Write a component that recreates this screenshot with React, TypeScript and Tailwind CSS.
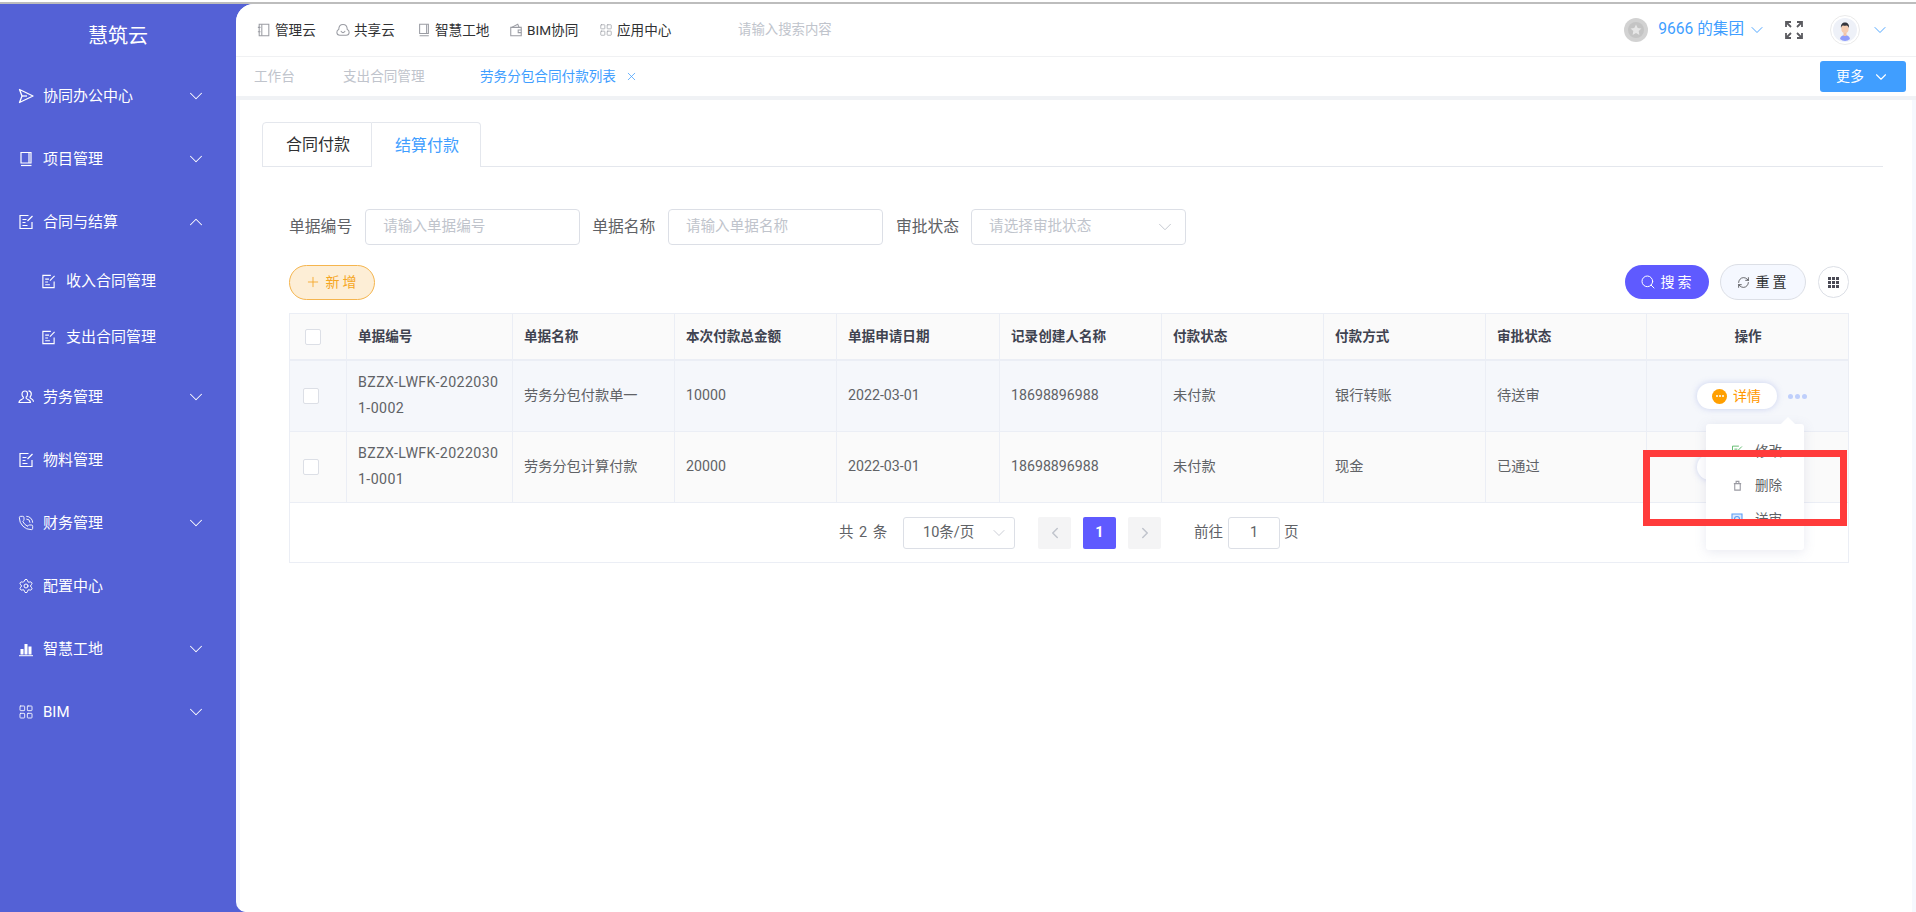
import { ChevronDown, ChevronLeft, ChevronRight, ChevronUp, LayoutGrid, PhoneCall, Plus, RefreshCw, Search, Settings, X } from 'lucide-react';
import type { ReactNode } from 'react';

const FONT = "font-['Roboto','Noto_Sans_CJK_SC',sans-serif]";

function PlaneIcon({ className }: { className?: string }) {
  return (
    <svg viewBox="0 0 16 16" fill="none" stroke="currentColor" strokeWidth="1.3" strokeLinejoin="round" className={className}>
      <path d="M1.500 1.500L15 8 1.500 14.500 4 8z" />
      <path d="M4 8h5" />
    </svg>
  );
}

function BookIcon({ className }: { className?: string }) {
  return (
    <svg viewBox="0 0 16 16" fill="none" stroke="currentColor" strokeWidth="1.2" className={className}>
      <path d="M3 1.5h10v10.5H3z" />
      <path d="M3 14.5h10.5" />
      <path d="M11 1.5v10.5" />
    </svg>
  );
}

function PaperPenIcon({ className }: { className?: string }) {
  return (
    <svg viewBox="0 0 16 16" fill="none" stroke="currentColor" strokeWidth="1.2" className={className}>
      <path d="M10.5 1.5H2v13h12V8" />
      <path d="M4.5 5.5h4M4.5 8.5h3M4.5 11.5h5" />
      <path d="M9.5 7l5-5" />
    </svg>
  );
}

function PeopleIcon({ className }: { className?: string }) {
  return (
    <svg viewBox="0 0 16 16" fill="none" stroke="currentColor" strokeWidth="1.2" className={className}>
      <path d="M7 2c-2 0-3 1.400-3 3.200 0 1.300.6 2.300 1.400 3 .3.800-.2 1.500-1.400 2-1.500.6-3 1.200-3 3.300h11.500c0-2-1.400-2.700-3-3.300-1.200-.5-1.700-1.200-1.400-2C8.900 7.500 9.500 6.500 9.500 5.200 9.500 3.400 9 2 7 2z" />
      <path d="M10.500 1.800c2 .2 2.800 1.600 2.800 3.300 0 1.200-.5 2.200-1.200 2.900-.2.800.2 1.300 1.200 1.800 1.200.6 2.200 1.200 2.200 3" />
    </svg>
  );
}

function BarsIcon({ className }: { className?: string }) {
  return (
    <svg viewBox="0 0 16 16" fill="currentColor" className={className}>
      <rect x="2.500" y="8" width="3" height="5.500" />
      <rect x="6.500" y="3" width="3" height="10.500" />
      <rect x="10.500" y="5.500" width="3" height="8" />
      <rect x="1" y="14.200" width="14" height="1" />
    </svg>
  );
}

function ManageIcon({ className }: { className?: string }) {
  return (
    <svg viewBox="0 0 16 16" fill="none" stroke="currentColor" strokeWidth="1.2" className={className}>
      <path d="M2.500 1.500h11v13h-11z" />
      <path d="M5.500 1.500v13" />
      <path d="M1 5h3M1 10h3" />
    </svg>
  );
}

function CloudIcon({ className }: { className?: string }) {
  return (
    <svg viewBox="0 0 16 16" fill="none" stroke="currentColor" strokeWidth="1.2" className={className}>
      <path d="M4.500 14C2.500 14 1 12.500 1 10.600c0-1.400.9-2.600 2.100-3.100C3.300 4 5.300 1.800 8 1.800s4.700 2.200 4.900 5.700c1.200.5 2.100 1.700 2.100 3.100 0 1.900-1.500 3.400-3.500 3.400z" />
      <path d="M5.500 9c.6 1.300 1.500 2 2.500 2s1.900-.7 2.500-2" />
    </svg>
  );
}

function WalletIcon({ className }: { className?: string }) {
  return (
    <svg viewBox="0 0 16 16" fill="none" stroke="currentColor" strokeWidth="1.2" className={className}>
      <path d="M2 5h12v9.500H2z" />
      <path d="M3 5l7-3.500L11.500 5" />
      <path d="M14 8h-3.500v3H14" />
    </svg>
  );
}

function FullscreenIcon({ className }: { className?: string }) {
  return (
    <svg viewBox="0 0 18 18" fill="none" stroke="currentColor" strokeWidth="1.800" className={className}>
      <path d="M1 6V1h5M1 1l5 5" />
      <path d="M12 1h5v5M17 1l-5 5" />
      <path d="M1 12v5h5M1 17l5-5" />
      <path d="M17 12v5h-5M17 17l-5-5" />
    </svg>
  );
}

function CoinIcon() {
  return (
    <svg viewBox="0 0 24 24" className="h-6 w-6 shrink-0">
      <circle cx="12" cy="12" r="12" fill="#d2d2d2" />
      <circle cx="12" cy="12" r="8" fill="#c4c4c4" />
      <path d="M12 6.500l1.700 3.500 3.800.5-2.800 2.600.7 3.800-3.400-1.900-3.400 1.900.7-3.800-2.800-2.600 3.800-.5z" fill="#e6e6e6" />
    </svg>
  );
}

function Avatar() {
  return (
    <svg viewBox="0 0 30 30" className="h-[30px] w-[30px] shrink-0">
      <circle cx="15" cy="15" r="14.500" fill="#fff" stroke="#eaeaea" />
      <circle cx="15" cy="15" r="12" fill="#eef1f8" />
      <path d="M10 24c.6-3 2.500-4 5-4s4.400 1 5 4c-1.500 1.300-3.200 2-5 2s-3.500-.7-5-2z" fill="#8f9dfb" />
      <rect x="13.500" y="16" width="3" height="5" fill="#f2c4a8" />
      <ellipse cx="15" cy="13.500" rx="3.700" ry="4.500" fill="#f6cdb2" />
      <path d="M11 13c-.6-3.500 1.500-5.500 4-5.500s4.600 2 4 5.500c-.5-1.600-1.300-2.400-2.500-2.600-1.500.3-3 .3-3.500.2-1.100.3-1.600 1.200-2 2.400z" fill="#33353d" />
    </svg>
  );
}

function GridDots() {
  const cells = [0, 1, 2, 3, 4, 5, 6, 7, 8];
  return (
    <div className="grid grid-cols-3 gap-px">
      {cells.map((c) => (
        <span key={c} className="h-[3px] w-[3px] bg-[#4a4a55]" />
      ))}
    </div>
  );
}

function NavItem({ icon, label, arrow }: { icon: ReactNode; label: string; arrow?: 'down' | 'up' }) {
  return (
    <div className="flex h-[63px] items-center pl-[18px] pr-[29px] text-[15px] text-white">
      <span className="mr-[9px] flex h-[16px] w-[16px] shrink-0 items-center justify-center">{icon}</span>
      <span className="flex-1">{label}</span>
      {arrow === 'down' && <ChevronDown size={22} strokeWidth={1.1} />}
      {arrow === 'up' && <ChevronUp size={22} strokeWidth={1.1} />}
    </div>
  );
}

function SubNavItem({ label }: { label: string }) {
  return (
    <div className="flex h-[56px] items-center pl-[41px] text-[15px] text-white">
      <PaperPenIcon className="mr-[10px] h-[15px] w-[15px]" />
      {label}
    </div>
  );
}

function Sidebar() {
  const iconCls = 'h-[16px] w-[16px]';
  return (
    <aside className="w-[236px] shrink-0">
      <div className="flex h-[60.5px] items-center justify-center pt-[3px] text-[20px] text-white">慧筑云</div>
      <NavItem icon={<PlaneIcon className={iconCls} />} label="协同办公中心" arrow="down" />
      <NavItem icon={<BookIcon className={iconCls} />} label="项目管理" arrow="down" />
      <NavItem icon={<PaperPenIcon className={iconCls} />} label="合同与结算" arrow="up" />
      <SubNavItem label="收入合同管理" />
      <SubNavItem label="支出合同管理" />
      <NavItem icon={<PeopleIcon className={iconCls} />} label="劳务管理" arrow="down" />
      <NavItem icon={<PaperPenIcon className={iconCls} />} label="物料管理" />
      <NavItem icon={<PhoneCall className={iconCls} strokeWidth={1.4} />} label="财务管理" arrow="down" />
      <NavItem icon={<Settings className={iconCls} strokeWidth={1.5} />} label="配置中心" />
      <NavItem icon={<BarsIcon className={iconCls} />} label="智慧工地" arrow="down" />
      <NavItem icon={<LayoutGrid className={iconCls} strokeWidth={1.3} />} label="BIM" arrow="down" />
    </aside>
  );
}

function TopBar() {
  const links = [
    { label: '管理云', icon: <ManageIcon className="h-[14px] w-[14px]" />, w: 'w-[79px]' },
    { label: '共享云', icon: <CloudIcon className="h-[14px] w-[14px]" />, w: 'w-[81px]' },
    { label: '智慧工地', icon: <BookIcon className="h-[14px] w-[14px]" />, w: 'w-[92px]' },
    { label: 'BIM协同', icon: <WalletIcon className="h-[14px] w-[14px]" />, w: 'w-[90px]' },
    { label: '应用中心', icon: <LayoutGrid className="h-[14px] w-[14px]" strokeWidth={1.2} />, w: 'w-[139px]' },
  ];
  return (
    <div className="flex h-[53px] items-center border-b border-[#f2f3f5] pl-[21px] pr-[26px]">
      {links.map((l) => (
        <div key={l.label} className={`flex items-center text-[13.6px] text-[#303133] ${l.w}`}>
          <span className="mr-[4px] text-[#9a9ca3]">{l.icon}</span>
          {l.label}
        </div>
      ))}
      <span className="flex-1 text-[13.4px] text-[#c0c4cc]">请输入搜索内容</span>
      <CoinIcon />
      <span className="ml-[10px] text-[15.6px] text-[#409eff]">9666 的集团</span>
      <ChevronDown size={20} strokeWidth={1.1} className="ml-[3px] text-[#409eff]" />
      <FullscreenIcon className="ml-[18px] h-[18px] w-[18px] text-[#5a5a5f]" />
      <div className="ml-[27px]">
        <Avatar />
      </div>
      <ChevronDown size={20} strokeWidth={1.1} className="ml-[10px] text-[#409eff]" />
    </div>
  );
}

function TabBar() {
  return (
    <div className="flex h-[39px] items-center pl-[18px] pr-[10px] text-[13.6px] shadow-[0_1px_3px_rgba(0,0,0,0.06)]">
      <span className="w-[89px] text-[#c0c4cc]">工作台</span>
      <span className="w-[137px] text-[#c0c4cc]">支出合同管理</span>
      <span className="text-[#409eff]">劳务分包合同付款列表</span>
      <X size={13} strokeWidth={1.4} className="ml-[9px] text-[#409eff]" />
      <div className="ml-auto flex h-[31px] w-[86px] items-center justify-center gap-[8px] rounded-[3px] bg-[#409eff] text-[14px] text-white">
        更多
        <ChevronDown size={18} strokeWidth={1.5} />
      </div>
    </div>
  );
}

function TextField({ placeholder, select }: { placeholder: string; select?: boolean }) {
  return (
    <div className="flex h-[36px] w-[215px] items-center justify-between rounded-[4px] border border-[#dcdfe6] pl-[17px] pr-[9px] text-[14.6px] text-[#c0c4cc]">
      {placeholder}
      {select && <ChevronDown size={22} strokeWidth={1} />}
    </div>
  );
}

const COLS = 'grid grid-cols-[57px_166px_162px_162px_163px_162px_162px_162px_161px_202px]';
const HEADERS = ['单据编号', '单据名称', '本次付款总金额', '单据申请日期', '记录创建人名称', '付款状态', '付款方式', '审批状态'];

const ROWS = [
  { no: 'BZZX-LWFK-20220301-0002', name: '劳务分包付款单一', amount: '10000', pay: '银行转账', status: '待送审', bg: 'bg-[#f5f7fb]' },
  { no: 'BZZX-LWFK-20220301-0001', name: '劳务分包计算付款', amount: '20000', pay: '现金', status: '已通过', bg: 'bg-[#fafafa]' },
];

function Checkbox({ className }: { className?: string }) {
  return <span className={`block h-[16px] w-[16px] rounded-[2px] border border-[#dcdfe6] bg-white ${className ?? ''}`} />;
}

function Cell({ children }: { children: ReactNode }) {
  return <div className="flex items-center border-r border-[#ebeef5] px-[11px] pb-[3px] text-[14.2px] leading-[26px] text-[#606266]">{children}</div>;
}

function DetailPill() {
  return (
    <div className="flex h-[26px] w-[80px] items-center rounded-full bg-white pl-[15px] text-[14px] text-[#ff9800] shadow-[0_0_6px_rgba(120,140,220,0.35)]">
      <span className="mr-[6px] flex h-[15px] w-[15px] items-center justify-center gap-px rounded-full bg-[#ff9f00]">
        <i className="h-[2px] w-[2px] rounded-full bg-white" />
        <i className="h-[2px] w-[2px] rounded-full bg-white" />
        <i className="h-[2px] w-[2px] rounded-full bg-white" />
      </span>
      详情
    </div>
  );
}

function MoreMenu() {
  return (
    <div className="absolute left-[59px] top-[63px] z-10 flex h-[126px] w-[98px] flex-col justify-center rounded-[3px] bg-white pb-[4px] text-[13.6px] text-[#606266] shadow-[0_2px_12px_rgba(100,110,160,0.15)]">
      <span className="absolute -top-[5px] left-[77px] h-[10px] w-[10px] rotate-45 bg-white" />
      <div className="flex h-[34px] items-center pl-[25px]">
        <PaperPenIcon className="mr-[12px] h-[12px] w-[12px] text-[#58b765]" />
        修改
      </div>
      <div className="flex h-[34px] items-center pl-[26px]">
        <svg viewBox="0 0 12 12" fill="none" stroke="#9a9aa2" strokeWidth="1.2" className="mr-[12px] h-[11px] w-[11px]">
          <path d="M3 4h6v7H3zM2 4h8M4.500 4V1.500h3V4" />
        </svg>
        删除
      </div>
      <div className="flex h-[34px] items-center pl-[25px]">
        <svg viewBox="0 0 12 12" fill="#dbe9fd" stroke="#5b9cf5" strokeWidth="1.1" className="mr-[12px] h-[12px] w-[12px]">
          <path d="M1 1h10v10H1z" />
          <circle cx="6" cy="6" r="2.500" />
        </svg>
        送审
      </div>
    </div>
  );
}

function ContractTable() {
  return (
    <div className="relative mt-[13px] w-[1560px] border border-[#ebeef5]">
      <div className={`${COLS} h-[47px] border-b-2 border-[#ebeef5] bg-[#fafafa]`}>
        <div className="flex items-center border-r border-[#ebeef5] pl-[15px]">
          <Checkbox />
        </div>
        {HEADERS.map((h) => (
          <div key={h} className="flex items-center border-r border-[#ebeef5] px-[11px] text-[13.6px] font-bold text-[#3f4350]">
            {h}
          </div>
        ))}
        <div className="flex items-center justify-center text-[13.6px] font-bold text-[#3f4350]">操作</div>
      </div>
      {ROWS.map((r, i) => (
        <div key={r.no} className={`${COLS} h-[71px] border-b border-[#ebeef5] ${r.bg}`}>
          <div className="flex items-center border-r border-[#ebeef5] pl-[13px]">
            <Checkbox />
          </div>
          <Cell>
            <span className="w-[141px] break-all tracking-[0.4px]">{r.no}</span>
          </Cell>
          <Cell>{r.name}</Cell>
          <Cell>{r.amount}</Cell>
          <Cell>2022-03-01</Cell>
          <Cell>18698896988</Cell>
          <Cell>未付款</Cell>
          <Cell>{r.pay}</Cell>
          <Cell>{r.status}</Cell>
          <div className="relative flex items-center pl-[50px]">
            <DetailPill />
            {i === 0 && (
              <>
                <div className="ml-[11px] flex gap-[2px]">
                  <i className="h-[5px] w-[5px] rounded-full bg-[#bfcffb]" />
                  <i className="h-[5px] w-[5px] rounded-full bg-[#bfcffb]" />
                  <i className="h-[5px] w-[5px] rounded-full bg-[#bfcffb]" />
                </div>
                <MoreMenu />
              </>
            )}
          </div>
        </div>
      ))}
      <div className="flex h-[59px] items-center pl-[549px] text-[14.5px] text-[#606266]">
        <span className="w-[64px] tracking-[1px]">共 2 条</span>
        <div className="flex h-[32px] w-[112px] items-center justify-between rounded-[3px] border border-[#dcdfe6] pl-[19px] pr-[5px]">
          10条/页
          <ChevronDown size={20} strokeWidth={1} className="text-[#c0c4cc]" />
        </div>
        <div className="ml-[23px] flex h-[32px] w-[33px] items-center justify-center rounded-[2px] bg-[#f4f4f5] text-[#c0c4cc]">
          <ChevronLeft size={18} strokeWidth={2} />
        </div>
        <div className="ml-[12px] flex h-[32px] w-[33px] items-center justify-center rounded-[2px] bg-[#5f5aff] font-bold text-white">1</div>
        <div className="ml-[12px] flex h-[32px] w-[33px] items-center justify-center rounded-[2px] bg-[#f4f4f5] text-[#c0c4cc]">
          <ChevronRight size={18} strokeWidth={2} />
        </div>
        <span className="ml-[33px]">前往</span>
        <div className="ml-[5px] flex h-[32px] w-[52px] items-center justify-center rounded-[3px] border border-[#dcdfe6]">1</div>
        <span className="ml-[4px]">页</span>
      </div>
      <div className="absolute left-[1353px] top-[136px] z-20 h-[76px] w-[204px] border-[7px] border-[#ff3b3b]" />
    </div>
  );
}

function Content() {
  return (
    <div className="mx-1 h-[812px] bg-white pl-[22px] pt-[22px]">
      <div className="flex h-[45px] w-[1621px] border-b border-[#e4e7ed]">
        <div className="flex h-[45px] w-[110px] items-center justify-center rounded-tl-[4px] border border-[#e4e7ed] pl-[2px] pt-[1px] text-[16px] text-[#303133]">合同付款</div>
        <div className="flex h-[45px] w-[109px] items-center justify-center rounded-tr-[4px] border border-l-0 border-b-0 border-[#e4e7ed] bg-white pl-[2px] pt-[1px] text-[16px] text-[#409eff]">结算付款</div>
      </div>
      <div className="pl-[27px]">
        <div className="mt-[42px] flex items-center text-[15.8px] text-[#606266]">
          <span className="mr-[13px]">单据编号</span>
          <TextField placeholder="请输入单据编号" />
          <span className="ml-[12px] mr-[12.500px]">单据名称</span>
          <TextField placeholder="请输入单据名称" />
          <span className="ml-[13px] mr-[12px]">审批状态</span>
          <TextField placeholder="请选择审批状态" select />
        </div>
        <div className="mt-[19px] flex h-[36px] w-[1560px] items-center">
          <div className="flex h-[35px] w-[86px] items-center justify-center gap-[5px] rounded-full border border-[#f5b54e] bg-[#fdeed6] text-[14px] tracking-[3px] text-[#f5a623]">
            <Plus size={16} strokeWidth={1.3} />
            新增
          </div>
          <div className="ml-auto flex h-[34px] w-[84px] items-center justify-center gap-[5px] rounded-full bg-[#5f5aff] text-[14px] tracking-[3px] text-white">
            <Search size={16} strokeWidth={1.5} />
            搜索
          </div>
          <div className="ml-[11px] flex h-[36px] w-[86px] items-center justify-center gap-[6px] rounded-full border border-[#dcdfe6] bg-[#f5f8ff] text-[14px] tracking-[3px] text-[#303133]">
            <RefreshCw size={13} strokeWidth={1.3} />
            重置
          </div>
          <div className="ml-[12px] flex h-[32px] w-[31px] items-center justify-center rounded-full border border-[#dcdfe6]">
            <GridDots />
          </div>
        </div>
        <ContractTable />
      </div>
    </div>
  );
}

export default function App() {
  return (
    <div className={`flex h-[912px] w-[1916px] flex-col overflow-hidden bg-[#5461d6] ${FONT}`}>
      <div className="h-[4px] shrink-0 border-t-2 border-white bg-[#bdbdbd]" />
      <div className="flex flex-1">
        <Sidebar />
        <main className="flex-1 overflow-hidden rounded-tl-[18px] rounded-bl-[10px] bg-[#f6f8fe]">
          <div className="bg-white">
            <TopBar />
            <TabBar />
          </div>
          <div className="h-[4px] bg-[#f0f2f5]" />
          <Content />
        </main>
      </div>
    </div>
  );
}
